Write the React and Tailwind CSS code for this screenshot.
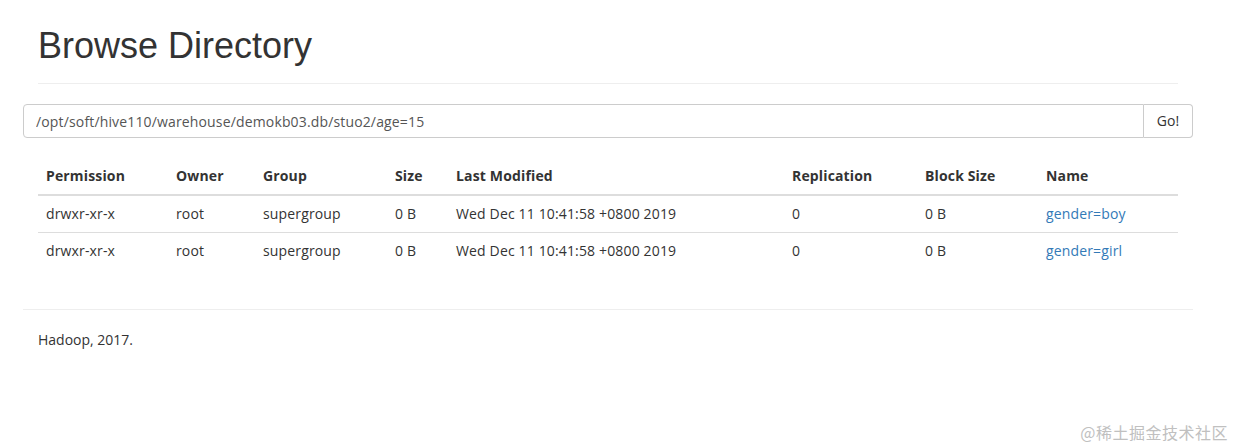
import React from 'react';

const rows = [
  { perm: 'drwxr-xr-x', owner: 'root', group: 'supergroup', size: '0 B', modified: 'Wed Dec 11 10:41:58 +0800 2019', repl: '0', block: '0 B', name: 'gender=boy' },
  { perm: 'drwxr-xr-x', owner: 'root', group: 'supergroup', size: '0 B', modified: 'Wed Dec 11 10:41:58 +0800 2019', repl: '0', block: '0 B', name: 'gender=girl' },
];

const cols = [
  { label: 'Permission', w: 'w-[130px]' },
  { label: 'Owner', w: 'w-[87px]' },
  { label: 'Group', w: 'w-[132px]' },
  { label: 'Size', w: 'w-[61px]' },
  { label: 'Last Modified', w: 'w-[336px]' },
  { label: 'Replication', w: 'w-[133px]' },
  { label: 'Block Size', w: 'w-[121px]' },
  { label: 'Name', w: 'w-[140px]' },
];

export default function App() {
  return (
    <div className="relative h-[448px] w-[1234px] bg-white text-[14px] leading-[20px] text-[#333]" style={{ fontFamily: '"Open Sans", "Noto Sans", sans-serif' }}>
      <div className="w-[1193px] pl-[23px] pt-[26px]">
        {/* page header */}
        <div className="mx-[15px] border-b border-[#eee] pb-[17px]">
          <h1 className="text-[36px] leading-[40px] font-normal text-[#333]" style={{ fontFamily: '"Liberation Sans", Arial, sans-serif' }}>
            Browse Directory
          </h1>
        </div>

        {/* path form */}
        <div className="mt-[20px] flex h-[34px]">
          <input
            readOnly
            value="/opt/soft/hive110/warehouse/demokb03.db/stuo2/age=15"
            className="h-[34px] flex-1 rounded-l-[4px] border border-[#ccc] px-[12px] text-[14px] tracking-[0.15px] text-[#555] outline-none"
          />
          <button className="h-[34px] w-[49px] rounded-r-[4px] border border-l-0 border-[#ccc] bg-white text-[14px] text-[#333]">
            Go!
          </button>
        </div>

        {/* listing */}
        <div className="mx-[15px] mt-[20px]">
          <table className="w-[1140px] table-fixed border-collapse tracking-[0.15px]">
            <thead>
              <tr>
                {cols.map((c) => (
                  <th key={c.label} className={`${c.w} border-b-2 border-[#ddd] p-[8px] text-left font-bold`}>
                    {c.label}
                  </th>
                ))}
              </tr>
            </thead>
            <tbody>
              {rows.map((r, i) => (
                <tr key={r.name}>
                  <td className={`p-[8px] ${i > 0 ? 'border-t border-[#ddd]' : ''}`}>{r.perm}</td>
                  <td className={`p-[8px] ${i > 0 ? 'border-t border-[#ddd]' : ''}`}>{r.owner}</td>
                  <td className={`p-[8px] ${i > 0 ? 'border-t border-[#ddd]' : ''}`}>{r.group}</td>
                  <td className={`p-[8px] ${i > 0 ? 'border-t border-[#ddd]' : ''}`}>{r.size}</td>
                  <td className={`p-[8px] ${i > 0 ? 'border-t border-[#ddd]' : ''}`}>{r.modified}</td>
                  <td className={`p-[8px] ${i > 0 ? 'border-t border-[#ddd]' : ''}`}>{r.repl}</td>
                  <td className={`p-[8px] ${i > 0 ? 'border-t border-[#ddd]' : ''}`}>{r.block}</td>
                  <td className={`p-[8px] ${i > 0 ? 'border-t border-[#ddd]' : ''}`}>
                    <a href="#" className="text-[#337ab7]">{r.name}</a>
                  </td>
                </tr>
              ))}
            </tbody>
          </table>
        </div>

        {/* footer */}
        <div className="mt-[40px] border-t border-[#eee] pt-[20px]">
          <p className="px-[15px]">Hadoop, 2017.</p>
        </div>
      </div>

      <div className="absolute bottom-[6px] right-[6px] text-[16px] tracking-[0.5px] text-[#c0c0c0]" style={{ fontFamily: '"Noto Sans CJK SC", sans-serif' }}>
        @稀土掘金技术社区
      </div>
    </div>
  );
}
